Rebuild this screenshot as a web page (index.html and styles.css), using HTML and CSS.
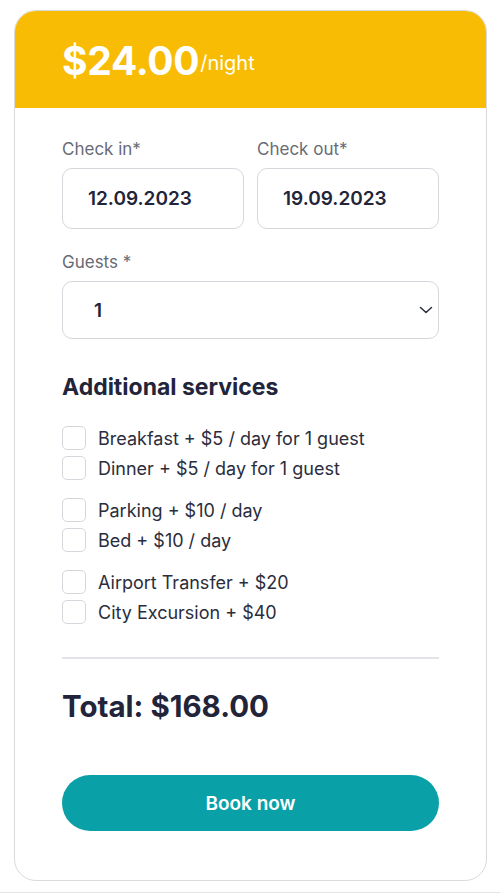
FILE: index.html
```html
<!DOCTYPE html>
<html lang="en">
<head>
   <meta charset="UTF-8">
   <meta name="viewport" content="width=device-width, initial-scale=1.0">
   <title>Booking</title>
   <link rel="stylesheet" href="styles.css">
</head>
<body>
   <div class="page">
      <div class="booking-card">
         <!-- Price header -->
         <div class="price-head">
            <div class="price-line"><span class="price">$24.00</span><span class="per">/night</span></div>
         </div>

         <form class="booking-form">
            <div class="date-row">
               <label class="field">
                  <span class="field-label">Check in*</span>
                  <span class="input">12.09.2023</span>
               </label>
               <label class="field">
                  <span class="field-label">Check out*</span>
                  <span class="input">19.09.2023</span>
               </label>
            </div>

            <label class="field guests">
               <span class="field-label">Guests *</span>
               <span class="select">
                  <span>1</span>
                  <svg width="14" height="8" viewBox="0 0 14 8"><path d="M1.5 1.5 L7 6.5 L12.5 1.5" fill="none" stroke="#2a2d40" stroke-width="1.5" stroke-linecap="round" stroke-linejoin="round"/></svg>
               </span>
            </label>

            <h3 class="services-title">Additional services</h3>

            <div class="services">
               <div class="service-group">
                  <label class="check"><span class="box"></span>Breakfast + $5 / day for 1 guest</label>
                  <label class="check"><span class="box"></span>Dinner + $5 / day for 1 guest</label>
               </div>
               <div class="service-group">
                  <label class="check"><span class="box"></span>Parking + $10 / day</label>
                  <label class="check"><span class="box"></span>Bed + $10 / day</label>
               </div>
               <div class="service-group">
                  <label class="check"><span class="box"></span>Airport Transfer + $20</label>
                  <label class="check"><span class="box"></span>City Excursion + $40</label>
               </div>
            </div>

            <hr class="divider">

            <div class="total">Total: $168.00</div>

            <button type="button" class="book-btn">Book now</button>
         </form>
      </div>
   </div>
   <div class="page-foot"></div>
</body>
</html>
```

FILE: styles.css
```css
body {
   margin: 0;
   padding: 0;
   background-color: #ffffff;
   font-family: Inter, "Noto Sans", sans-serif;
   color: #22243a;
}

.page {
   padding: 10px 13px 11px 14px;
}

.page-foot {
   height: 40px;
   background-color: #fafafa;
   border-top: 1px solid #e4e4ea;
}

.booking-card {
   border: 1px solid #dadade;
   border-radius: 22px;
   overflow: hidden;
   background: #fff;
}

.price-head {
   background-color: #f8bc05;
   height: 97px;
   padding-left: 47px;
   display: flex;
   align-items: center;
   color: #fff;
   box-sizing: border-box;
}

.price-line {
   display: flex;
   align-items: baseline;
   margin-top: 2px;
}

.price {
   font-size: 39px;
   font-weight: 700;
   letter-spacing: -0.3px;
}

.per {
   font-size: 20px;
   margin-left: 1px;
   position: relative;
   top: -5px;
}

.booking-form {
   padding: 29px 47px 49px 47px;
   display: flex;
   flex-direction: column;
}

.date-row {
   display: flex;
   gap: 13px;
}

.field {
   display: flex;
   flex-direction: column;
   flex: 1;
}

.field-label {
   font-size: 17px;
   color: #676b76;
   line-height: 24px;
   margin-bottom: 7px;
}

.input {
   height: 61px;
   border: 1px solid #d6d6dc;
   border-radius: 10px;
   box-sizing: border-box;
   display: flex;
   align-items: center;
   padding-left: 25px;
   font-size: 19px;
   font-weight: 600;
   color: #22243a;
}

.guests {
   margin-top: 21px;
}

.select {
   height: 58px;
   border: 1px solid #d6d6dc;
   border-radius: 10px;
   box-sizing: border-box;
   display: flex;
   align-items: center;
   justify-content: space-between;
   padding: 0 5px 0 31px;
   font-size: 19px;
   font-weight: 600;
}

.services-title {
   margin: 33px 0 0 0;
   font-size: 23px;
   font-weight: 700;
   line-height: 30px;
}

.services {
   margin-top: 24px;
   display: flex;
   flex-direction: column;
   gap: 18px;
}

.service-group {
   display: flex;
   flex-direction: column;
   gap: 6px;
}

.check {
   display: flex;
   align-items: center;
   height: 24px;
   font-size: 18px;
   color: #2b2d3c;
}

.box {
   width: 24px;
   height: 24px;
   box-sizing: border-box;
   border: 1px solid #d6d6dc;
   border-radius: 5px;
   margin-right: 12px;
}

.divider {
   border: none;
   border-top: 2px solid #e4e4e8;
   margin: 33px 0 0 0;
}

.total {
   margin-top: 27px;
   font-size: 29.5px;
   font-weight: 700;
   line-height: 40px;
}

.book-btn {
   margin-top: 49px;
   height: 56px;
   border: none;
   border-radius: 28px;
   background-color: #0aa0a8;
   color: #fff;
   font-family: inherit;
   font-size: 19px;
   font-weight: 600;
}
```
